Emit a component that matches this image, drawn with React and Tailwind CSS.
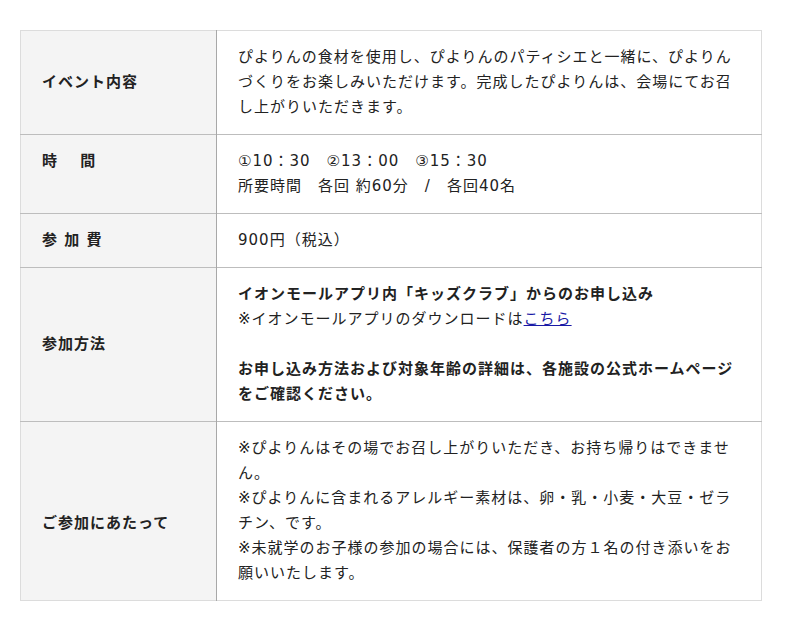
import React from "react";

const rows = [
  {
    head: "イベント内容",
    body: (
      <p>
        ぴよりんの食材を使用し、ぴよりんのパティシエと一緒に、ぴよりんづくりをお楽しみいただけます。完成したぴよりんは、会場にてお召し上がりいただきます。
      </p>
    ),
  },
  {
    head: (
      <>
        時　 間
        <br />
        &nbsp;
      </>
    ),
    body: (
      <>
        <p>①10：30　②13：00　③15：30</p>
        <p>所要時間　各回 約60分　/　各回40名</p>
      </>
    ),
  },
  {
    head: "参 加 費",
    body: <p>900円（税込）</p>,
  },
  {
    head: "参加方法",
    body: (
      <>
        <p className="font-bold">イオンモールアプリ内「キッズクラブ」からのお申し込み</p>
        <p>
          ※イオンモールアプリのダウンロードは
          <a href="#" className="text-[#1a1aa6] underline">
            こちら
          </a>
        </p>
        <p>&nbsp;</p>
        <p className="font-bold">
          お申し込み方法および対象年齢の詳細は、各施設の公式ホームページをご確認ください。
        </p>
      </>
    ),
  },
  {
    head: (
      <>
        &nbsp;
        <br />
        ご参加にあたって
      </>
    ),
    body: (
      <>
        <p>※ぴよりんはその場でお召し上がりいただき、お持ち帰りはできません。</p>
        <p>※ぴよりんに含まれるアレルギー素材は、卵・乳・小麦・大豆・ゼラチン、です。</p>
        <p>※未就学のお子様の参加の場合には、保護者の方１名の付き添いをお願いいたします。</p>
      </>
    ),
  },
];

export default function App() {
  return (
    <div
      className="min-h-screen bg-white px-5 pt-[30px] text-[15px] leading-[25px] tracking-[1px] text-[#222]"
      style={{ fontFamily: '"DejaVu Sans", "Noto Sans CJK JP", sans-serif' }}
    >
      <table className="w-[742px] border-collapse border border-[#dcdcdc]">
        <tbody>
          {rows.map((row, i) => (
            <tr key={i} className="border-t border-[#bdbdbd] first:border-t-[#dcdcdc]">
              <th className="w-[196px] border-r border-[#a8a8a8] bg-[#f4f4f4] px-[21px] py-[14px] text-left align-middle font-bold">
                {row.head}
              </th>
              <td className="px-[21px] py-[14px] align-top">{row.body}</td>
            </tr>
          ))}
        </tbody>
      </table>
    </div>
  );
}
